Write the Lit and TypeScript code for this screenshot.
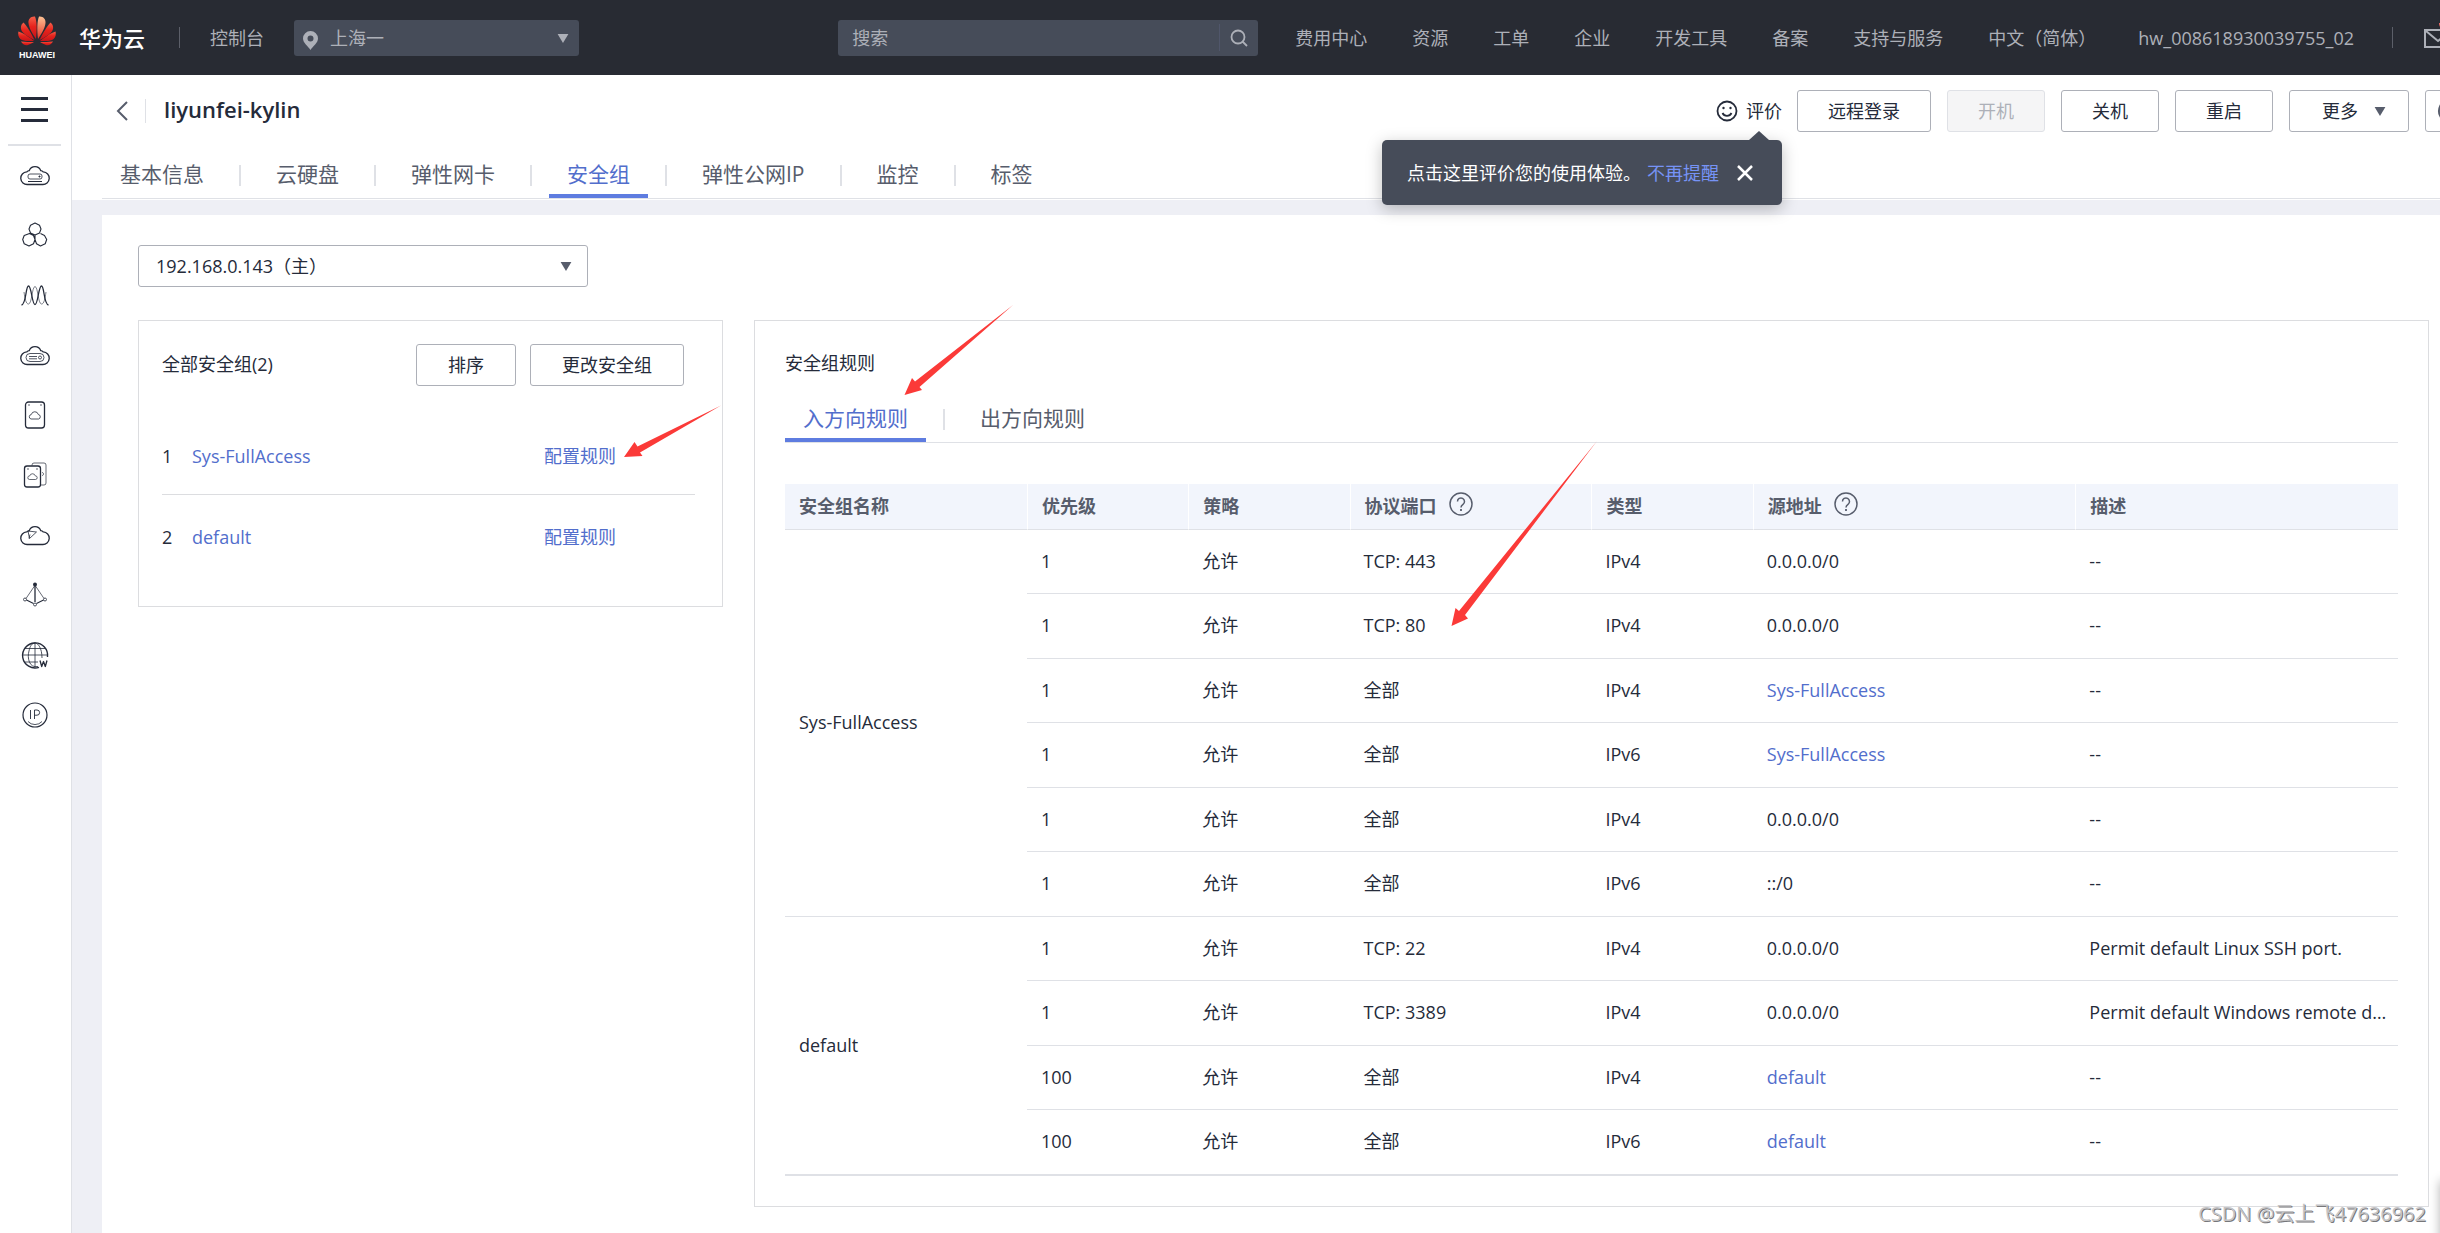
import { LitElement, html, svg, css, nothing } from "lit";
import { customElement, state } from "lit/decorators.js";

interface Rule {
  priority: string;
  port: string;
  type: string;
  source: string;
  link?: boolean;
  note: string;
}

const GROUPS: { name: string; rules: Rule[] }[] = [
  {
    name: "Sys-FullAccess",
    rules: [
      { priority: "1", port: "TCP: 443", type: "IPv4", source: "0.0.0.0/0", note: "--" },
      { priority: "1", port: "TCP: 80", type: "IPv4", source: "0.0.0.0/0", note: "--" },
      { priority: "1", port: "全部", type: "IPv4", source: "Sys-FullAccess", link: true, note: "--" },
      { priority: "1", port: "全部", type: "IPv6", source: "Sys-FullAccess", link: true, note: "--" },
      { priority: "1", port: "全部", type: "IPv4", source: "0.0.0.0/0", note: "--" },
      { priority: "1", port: "全部", type: "IPv6", source: "::/0", note: "--" },
    ],
  },
  {
    name: "default",
    rules: [
      { priority: "1", port: "TCP: 22", type: "IPv4", source: "0.0.0.0/0", note: "Permit default Linux SSH port." },
      { priority: "1", port: "TCP: 3389", type: "IPv4", source: "0.0.0.0/0", note: "Permit default Windows remote desktop port." },
      { priority: "100", port: "全部", type: "IPv4", source: "default", link: true, note: "--" },
      { priority: "100", port: "全部", type: "IPv6", source: "default", link: true, note: "--" },
    ],
  },
];

const NAV = ["费用中心", "资源", "工单", "企业", "开发工具", "备案", "支持与服务", "中文（简体）"];
const TABS = ["基本信息", "云硬盘", "弹性网卡", "安全组", "弹性公网IP", "监控", "标签"];
const RULE_TABS = ["入方向规则", "出方向规则"];

const CLOUD = "M7.5 24.5a6.3 6.3 0 0 1-.8-12.600 5 5 0 0 1 2.500-1.200 6.200 6.200 0 0 1 11.600 0 5 5 0 0 1 2.500 1.200 6.300 6.300 0 0 1-.8 12.600z";

// Side menu icons, each on a 30 x 30 canvas.
const SIDE_ICONS = [
  {
    label: "弹性云服务器",
    art: svg`<path d=${CLOUD} stroke-width="1.300"/><rect x="8" y="14" width="14" height="5" rx="2" stroke-width=".8"/><circle cx="19.500" cy="16.500" r=".6" fill="currentColor"/><path d="M8 21.500h14" stroke-width="1"/>`,
  },
  {
    label: "裸金属服务器",
    art: svg`<path d="M15 3l4.500 2.200 1.500 3.800-1.500 4-4.500 2-4.500-2-1.500-4 1.500-3.800zM9.500 13.500l4 2 1.500 4-1.500 4.200-4.500 2.300-4.800-2.300-1.500-4.200 1.500-4zM20.500 13.500l4 2 2.200 4-1.500 4.200-4.700 2.300-4-2.300-1.500-4.200V15" stroke-width="1.100"/>`,
  },
  {
    label: "弹性伸缩",
    art: svg`<path d="M1.500 25c5-1 4-19 7-19s3.500 18.500 6.500 18.500S18.500 6 21.500 6s2 18 7 19" stroke-width="1.300"/><path d="M4 12c1 7 2 12 4.500 12C12 24 12 6.500 15 6.500S18 24 21.500 24c2.500 0 3.500-5 4.500-12" stroke-width=".6"/>`,
  },
  {
    label: "云耀云服务器",
    art: svg`<path d=${CLOUD} stroke-width="1.300"/><rect x="6" y="13.500" width="18" height="8" rx="4" stroke-width=".8"/><path d="M9 16.500h8M9 18.800h8" stroke-width=".8"/><circle cx="20" cy="17.500" r="1.500" stroke-width=".8"/>`,
  },
  {
    label: "云手机",
    art: svg`<rect x="5.500" y="2" width="19" height="26" rx="3" stroke-width="1.300"/><path d="M11 19a2.300 2.300 0 0 1 .3-4.500 3.600 3.600 0 0 1 7 0 2.300 2.300 0 0 1 .3 4.500z" stroke-width=".8"/><circle cx="9" cy="5" r=".7" fill="currentColor" stroke="none"/><circle cx="21" cy="5" r=".7" fill="currentColor" stroke="none"/>`,
  },
  {
    label: "专属主机",
    art: svg`<rect x="4.500" y="6" width="16" height="21" rx="2.500" stroke-width="1.300"/><path d="M12 5.500V5a2 2 0 0 1 2-2h10a2 2 0 0 1 2 2v18a2 2 0 0 1-2 2h-3M9.500 19.500a1.800 1.800 0 0 1 .2-3.600 2.900 2.900 0 0 1 5.600 0 1.800 1.800 0 0 1 .2 3.600zM22 12.500c2 0 2 3 0 3" stroke-width=".7"/><circle cx="8" cy="9" r=".7" fill="currentColor" stroke="none"/><circle cx="17" cy="9" r=".7" fill="currentColor" stroke="none"/>`,
  },
  {
    label: "云服务器迁移",
    art: svg`<path d=${CLOUD} stroke-width="1.300"/><path d="M8 11l8.500 1-7 6.500zM9 18.500l1-4" stroke-width=".8"/>`,
  },
  {
    label: "弹性负载均衡",
    art: svg`<path d="M15 5v17" stroke-width="1.300"/><path d="M14.500 6L6 18.500M15.500 6L24 18.500" stroke-width=".7"/><path d="M6.500 20l7 3.500M23.500 20l-7 3.500" stroke-width="1.100"/><circle cx="15" cy="4.500" r="2" fill="currentColor" stroke="none"/><circle cx="5" cy="19.500" r="1.500" stroke-width=".8"/><circle cx="25" cy="19.500" r="1.500" stroke-width=".8"/><circle cx="15" cy="24.500" r="1.500" stroke-width=".8"/>`,
  },
  {
    label: "域名",
    art: svg`<path d="M19 27.300A12.500 12.500 0 1 1 27.500 17" stroke-width="1.400"/><path d="M15 2.500V27M2.500 15H27M5 8.500h20M5 22h13" stroke-width=".8"/><path d="M18 26.500c-9 2-11-9-9-15.500C10 6 12 3 15 3s7 5 7 15" stroke-width=".8"/><path d="M20 20.500l1.700 6 1.800-5 1.800 5 1.700-6" stroke-width="1.300"/>`,
  },
  {
    label: "弹性公网IP",
    art: svg`<circle cx="15" cy="15" r="12" stroke-width="1.200"/><path d="M10.500 10v9M14.500 19v-9h2.500a2.600 2.600 0 0 1 0 5.200h-2.500" stroke-width=".9"/><path d="M8 21.500a9.500 9.500 0 0 0 14 0" stroke-width=".8"/>`,
  },
];

const caret = html`<svg class="caret" viewBox="0 0 12 10" aria-hidden="true"><path d="M0 0h12L6 10z" fill="currentColor" /></svg>`;

const help = html`<svg class="help" viewBox="0 0 24 24" aria-hidden="true" fill="none" stroke="currentColor" stroke-width="1.500">
  <circle cx="12" cy="12" r="11" /><path d="M8.500 9.500a3.500 3.500 0 1 1 5.500 2.800c-1.300.9-2 1.500-2 3.200" /><path d="M12 17v2" stroke-width="1.800" />
</svg>`;

@customElement("app-root")
export class AppRoot extends LitElement {
  @state() private tab = "安全组";
  @state() private ruleTab = "入方向规则";
  @state() private tipOpen = true;

  static styles = css`
    :host {
      display: block;
      position: relative;
      overflow: hidden;
      min-height: 100vh;
      background: #fff;
      color: #252b3a;
      font: 18px/28px "Open Sans", "Noto Sans CJK SC", sans-serif;
    }
    * { box-sizing: border-box; }
    a { color: #526ecc; text-decoration: none; }
    button, input, select { font: inherit; color: inherit; margin: 0; }
    button { cursor: pointer; }
    h1, h2, p, ul, ol { margin: 0; padding: 0; font-weight: 400; font-size: inherit; list-style: none; }

    .top {
      display: flex;
      align-items: center;
      height: 75px;
      padding-left: 18px;
      overflow: hidden;
      background: #282b33;
      color: #adb0b8;
      white-space: nowrap;
    }
    .top a { color: inherit; }
    .logo { display: block; flex: none; width: 38px; height: 44px; }
    .top .brand { margin-left: 23px; color: #fff; font-size: 22px; font-weight: 500; }
    .bar { flex: none; width: 1px; height: 21px; background: #5c5f69; }
    .brand + .bar { margin: 0 30px 0 34px; }
    .region { position: relative; flex: none; width: 285px; margin-left: 30px; }
    .region select {
      display: block; width: 100%; height: 36px; padding: 0 36px 0 36px;
      border: 0; border-radius: 3px; background: #464c59; appearance: none;
    }
    .pin { position: absolute; left: 9px; top: 11px; width: 15px; height: 19px; pointer-events: none; }
    .caret { width: 12px; height: 9px; pointer-events: none; }
    .region .caret, .nic .caret { position: absolute; right: 10px; top: 50%; margin-top: -4px; }
    .search {
      display: flex; flex: none; align-items: center; width: 420px; height: 36px;
      margin-left: auto; border-radius: 3px; background: #464c59;
    }
    .search input {
      flex: 1; min-width: 0; height: 27px; padding: 0 14px; background: none;
      border: 0; border-right: 1px solid #50566a; outline: 0;
    }
    .search input::placeholder { color: inherit; opacity: 1; }
    .search button { width: 38px; height: 36px; padding: 8px 10px; border: 0; background: none; }
    .search svg { display: block; width: 18px; height: 18px; }
    .nav { display: flex; gap: 45px; margin-left: 37px; }
    .account { margin: 0 38px 0 42px; }
    .mail { flex: none; width: 30px; height: 30px; margin: 0 -14px 0 31px; }

    .shell { display: flex; min-height: calc(100vh - 75px); }
    .side {
      display: flex; flex-direction: column; align-items: center; flex: none; padding-right: 2px;
      width: 72px; border-right: 1px solid #dfe1e6; background: #fff; color: #252b3a;
    }
    .burger {
      display: flex; flex-direction: column; justify-content: space-between;
      width: 27px; height: 25px; margin: 22px 0; padding: 0; border: 0; background: none;
    }
    .burger i { height: 3px; background: #252b3a; }
    .side hr { width: 53px; margin: 0; border: 0; border-top: 2px solid #dfe1e6; }
    .side ul { display: grid; gap: 30px; margin-top: 14px; }
    .side a { display: block; color: inherit; }
    .side svg { display: block; width: 30px; height: 30px; }

    .page { display: flex; flex: 1; flex-direction: column; min-width: 0; background: #eeeff5; }
    .head { padding-left: 30px; background: #fff; border-bottom: 1px solid #fff; }
    .title { display: flex; align-items: center; height: 71px; padding: 1px 0 0 14px; white-space: nowrap; }
    .back { display: flex; width: 12px; height: 20px; padding: 0; border: 0; background: none; }
    .title .bar { margin: 0 18px 0 17px; height: 24px; background: #dfe1e6; }
    .title h1 { padding-bottom: 4px; font-size: 22px; font-weight: 600; }
    .rate { position: relative; display: flex; flex: none; margin-left: auto; }
    .smile {
      display: flex; align-items: center; gap: 8px; height: 42px; padding: 0; border: 0; background: none;
    }
    .smile svg { width: 22px; height: 22px; }
    .tip {
      position: absolute; z-index: 2; top: 50px; right: 0; display: flex; align-items: center;
      height: 65px; padding: 0 29px 0 25px; border-radius: 5px; background: #464c59; color: #fff;
      box-shadow: 0 4px 16px rgba(0, 0, 0, 0.25);
    }
    .tip::before {
      content: ""; position: absolute; top: -9px; right: 13px;
      border: solid transparent; border-width: 0 10px 9px; border-bottom-color: #464c59;
    }
    .tip a { margin: 0 18px 0 6px; color: #7693f5; }
    .tip button { width: 16px; height: 16px; padding: 0; border: 0; background: none; }
    .tip svg { display: block; width: 16px; height: 16px; }
    .btn {
      flex: none; height: 42px; padding: 0 30px; border: 1px solid #adb0b8; border-radius: 3px;
      background: #fff; color: #252b3a; white-space: nowrap;
    }
    .btn:disabled { border-color: #dfe1e6; background: #f5f5f6; color: #adb0b8; }
    .actions { display: flex; flex: none; gap: 16px; margin: 0 -36px 0 15px; }
    .actions .more { display: flex; align-items: center; gap: 16px; padding: 0 22px 0 32px; color: #252b3a; }
    .actions .more .caret { color: #575d6c; }
    .actions .cut { display: flex; align-items: center; width: 51px; padding: 0 11px; }
    .cut svg { width: 27px; height: 27px; }

    .tabs { display: flex; border-bottom: 1px solid #dfe1e6; font-size: 21px; white-space: nowrap; }
    .head .tabs { padding-top: 14px; }
    .tabs li { display: flex; align-items: flex-start; }
    .tabs li + li::before {
      content: ""; width: 2px; height: 21px; margin: 5px 17px 0; background: #dfe1e6;
    }
    .tabs button {
      padding: 0 18px 6px; border: 0; border-bottom: 4px solid transparent;
      background: none; color: #575d6c; line-height: 28px;
    }
    .tabs button.on { border-bottom-color: #5e7ce0; color: #526ecc; }

    .sheet { flex: 1; margin: 15px 0 0 30px; padding: 30px 11px 26px 36px; background: #fff; }
    .nic { position: relative; width: 450px; margin-bottom: 33px; }
    .nic select {
      display: block; width: 100%; height: 42px; padding: 0 40px 0 17px; appearance: none;
      border: 1px solid #adb0b8; border-radius: 3px; background: #fff;
    }
    .nic .caret { right: 16px; color: #575d6c; }
    .cols { display: flex; align-items: flex-start; gap: 31px; }
    .card { border: 1px solid #dcdde0; background: #fff; }
    .groups { flex: none; width: 585px; padding: 23px 27px 31px 23px; }
    .ghead { display: flex; align-items: center; gap: 14px; margin-bottom: 28px; padding-right: 11px; }
    .ghead h2 { margin-right: auto; padding-bottom: 3px; }
    .ghead .btn { padding: 0 31px; }
    .groups li {
      display: grid; grid-template-columns: 30px 1fr 151px; padding: 29px 0 25px; line-height: 26px;
    }
    .groups li + li { border-top: 1px solid #dcdde0; }
    .rules { flex: 1; min-width: 0; padding: 28px 30px 30px; }
    .rules .tabs { margin-top: 27px; }

    table { width: 100%; margin-top: 41px; table-layout: fixed; border-collapse: separate; border-spacing: 0; border-bottom: 1px solid #dfe1e6; }
    th, td { padding: 0 8px 2px 14px; text-align: left; border-bottom: 1px solid #dfe1e6; }
    td { height: 65px; overflow: hidden; white-space: nowrap; text-overflow: ellipsis; }
    tbody tr:nth-child(odd) td { height: 64px; }
    thead th { height: 46px; background: #f2f5fc; color: #575d6c; font-weight: 700; }
    thead th + th { border-left: 1px solid #fff; }
    tbody th { font-weight: 400; }
    .label { display: flex; align-items: flex-start; gap: 12px; }
    .help { flex: none; width: 24px; height: 24px; }
    .w10 { width: 10%; }
    .w15 { width: 15%; }
    .w20 { width: 20%; }

    .marks { position: absolute; left: 0; top: 0; pointer-events: none; }
    .credit {
      position: absolute; right: 14px; bottom: 5px; color: #c4c4c6; font-size: 20px;
      text-shadow: 1px 1px 0 #77777a; pointer-events: none;
    }
    .dock {
      position: absolute; right: -48px; bottom: -20px; width: 48px; height: 72px;
      box-shadow: 0 0 10px rgba(0, 0, 0, 0.3);
    }
  `;

  private tabBar(names: string[], current: string, pick: (name: string) => void) {
    return html`<ul class="tabs" role="tablist">
      ${names.map(
        (name) => html`<li role="presentation">
          <button role="tab" class=${name === current ? "on" : ""} aria-selected=${name === current ? "true" : "false"}
            @click=${() => pick(name)}>${name}</button>
        </li>`
      )}
    </ul>`;
  }

  private header() {
    return html`<header class="top">
      <svg class="logo" viewBox="0 0 38 44" role="img" aria-label="HUAWEI">
        <defs>
          <linearGradient id="petal" x1="0" y1="0" x2="0" y2="1">
            <stop offset="0" stop-color="#f5604a" /><stop offset=".45" stop-color="#e6231c" /><stop offset="1" stop-color="#c4151b" />
          </linearGradient>
          <linearGradient id="glow" x1="0" y1="0" x2="0" y2="1">
            <stop offset="0" stop-color="#fbc294" /><stop offset="1" stop-color="#e8382a" />
          </linearGradient>
        </defs>
        <g fill="url(#petal)">
          <path d="M18 23C19 14 19 5 17 .5 13 0 10 3 10.500 7c.5 5 4 11 7.500 16z" />
          <path d="M20 23C19 14 19 5 21 .5c4-.5 7 2.500 6.500 6.500-.5 5-4 11-7.500 16z" fill="url(#glow)" />
          <path d="M16.500 24C13 17 9 10 5.500 6.500 2.500 9 2 13 4.500 16c3 3.500 8 6 12 8z" />
          <path d="M21.500 24C25 17 29 10 32.500 6.500c3 2.500 3.500 6.500 1 9.500-3 3.500-8 6-12 8z" />
          <path d="M16 25C11 21 5 17 .5 15.500-.5 19 1 22.500 4 24c3.500 1.300 8 1.200 12 1z" />
          <path d="M22 25c5-4 11-8 15.500-9.500 1 3.500-.5 7-3.500 8.500-3.500 1.300-8 1.200-12 1z" />
          <path d="M16 26c-4.500 0-9 0-13-.5 1.500 3 4.500 4.300 7 3.500 2.300-.8 4.500-2 6-3z" />
          <path d="M22 26c4.500 0 9 0 13-.5-1.500 3-4.500 4.300-7 3.500-2.300-.8-4.500-2-6-3z" />
        </g>
        <text x="19" y="42" fill="#fff" text-anchor="middle" font-family="Liberation Sans, sans-serif" font-size="9" font-weight="700">HUAWEI</text>
      </svg>
      <a class="brand" href="#home">华为云</a>
      <span class="bar"></span>
      <a href="#console">控制台</a>
      <div class="region">
        <svg class="pin" viewBox="0 0 15 19" aria-hidden="true"><path fill="currentColor" fill-rule="evenodd" d="M7.500 0A7.500 7.500 0 0 0 0 7.500C0 12 5 15 7.500 19 10 15 15 12 15 7.500A7.500 7.500 0 0 0 7.500 0zm0 4.500a3 3 0 1 1 0 6 3 3 0 0 1 0-6z" /></svg>
        <select aria-label="区域"><option>上海一</option></select>
        ${caret}
      </div>
      <form class="search" role="search" @submit=${(e: Event) => e.preventDefault()}>
        <input type="text" placeholder="搜索" aria-label="搜索" />
        <button aria-label="搜索">
          <svg viewBox="0 0 18 18" fill="none" stroke="currentColor" stroke-width="1.800"><circle cx="8" cy="8" r="6.500" /><path d="M12.500 12.500l4.500 4.500" /></svg>
        </button>
      </form>
      <nav class="nav">${NAV.map((n) => html`<a href="#nav">${n}</a>`)}</nav>
      <a class="account" href="#account">hw_008618930039755_02</a>
      <span class="bar"></span>
      <svg class="mail" viewBox="0 0 30 30" aria-label="消息" role="img">
        <path d="M1 7h26v17H1zM2 8l12 10L26 8" fill="none" stroke="#adb0b8" stroke-width="2" /><circle cx="22" cy="0" r="7" fill="#f66f6a" />
      </svg>
    </header>`;
  }

  private side() {
    return html`<aside class="side">
      <button class="burger" aria-label="菜单"><i></i><i></i><i></i></button>
      <hr />
      <ul>
        ${SIDE_ICONS.map(
          (icon) => html`<li><a href="#service" aria-label=${icon.label}>
            <svg viewBox="0 0 30 30" fill="none" stroke="currentColor" stroke-linejoin="round">${icon.art}</svg>
          </a></li>`
        )}
      </ul>
    </aside>`;
  }

  private title() {
    return html`<div class="title">
      <button class="back" aria-label="返回">
        <svg width="12" height="20" viewBox="0 0 12 20" fill="none" stroke="#575d6c" stroke-width="2"><path d="M11 1L2 10l9 9" /></svg>
      </button>
      <span class="bar"></span>
      <h1>liyunfei-kylin</h1>
      <div class="rate">
        <button class="smile">
          <svg viewBox="0 0 22 22" fill="none" stroke="currentColor" stroke-width="1.800">
            <circle cx="11" cy="11" r="9.500" /><path d="M6.500 13a5 5 0 0 0 9 0" />
            <circle cx="7.500" cy="8" r="1.200" fill="currentColor" stroke="none" /><circle cx="14.500" cy="8" r="1.200" fill="currentColor" stroke="none" />
          </svg>评价
        </button>
        ${this.tipOpen
          ? html`<div class="tip" role="tooltip">
              <span>点击这里评价您的使用体验。</span><a href="#mute">不再提醒</a>
              <button aria-label="关闭" @click=${() => (this.tipOpen = false)}>
                <svg viewBox="0 0 16 16" stroke="#fff" stroke-width="2.500"><path d="M1 1l14 14M15 1L1 15" /></svg>
              </button>
            </div>`
          : nothing}
      </div>
      <div class="actions">
        <button class="btn">远程登录</button>
        <button class="btn" disabled>开机</button>
        <button class="btn">关机</button>
        <button class="btn">重启</button>
        <button class="btn more">更多${caret}</button>
        <button class="btn cut" aria-label="刷新">
          <svg viewBox="0 0 27 27" fill="none" stroke="#575d6c" stroke-width="2"><path d="M20 4.500A11 11 0 1 0 24 13" /><path d="M20 0v5h-5" /></svg>
        </button>
      </div>
    </div>`;
  }

  private table() {
    return html`<table>
      <thead>
        <tr>
          <th class="w15" scope="col">安全组名称</th>
          <th class="w10" scope="col">优先级</th>
          <th class="w10" scope="col">策略</th>
          <th class="w15" scope="col"><span class="label">协议端口${help}</span></th>
          <th class="w10" scope="col">类型</th>
          <th class="w20" scope="col"><span class="label">源地址${help}</span></th>
          <th class="w20" scope="col">描述</th>
        </tr>
      </thead>
      <tbody>
        ${GROUPS.map((group) =>
          group.rules.map(
            (r, i) => html`<tr>
              ${i === 0 ? html`<th scope="rowgroup" rowspan=${group.rules.length}>${group.name}</th>` : nothing}
              <td>${r.priority}</td>
              <td>允许</td>
              <td>${r.port}</td>
              <td>${r.type}</td>
              <td>${r.link ? html`<a href="#group">${r.source}</a>` : r.source}</td>
              <td>${r.note}</td>
            </tr>`
          )
        )}
      </tbody>
    </table>`;
  }

  render() {
    return html`
      ${this.header()}
      <div class="shell">
        ${this.side()}
        <main class="page">
          <div class="head">${this.title()}${this.tabBar(TABS, this.tab, (t) => (this.tab = t))}</div>
          <div class="sheet">
            <div class="nic">
              <select aria-label="网卡"><option>192.168.0.143（主）</option></select>
              ${caret}
            </div>
            <div class="cols">
              <section class="card groups">
                <div class="ghead">
                  <h2>全部安全组(2)</h2>
                  <button class="btn">排序</button>
                  <button class="btn">更改安全组</button>
                </div>
                <ol>
                  ${GROUPS.map(
                    (g, i) => html`<li>
                      <span>${i + 1}</span><a href="#group">${g.name}</a><a href="#rules">配置规则</a>
                    </li>`
                  )}
                </ol>
              </section>
              <section class="card rules">
                <h2>安全组规则</h2>
                ${this.tabBar(RULE_TABS, this.ruleTab, (t) => (this.ruleTab = t))} ${this.table()}
              </section>
            </div>
          </div>
        </main>
      </div>
      <svg class="marks" width="1640" height="660" aria-hidden="true" fill="#fb3a38">
        <path d="M624 457l10.500-15 3 4.500L721 405.500 640 452.500l2.500 3.500z" />
        <path d="M904.500 395l7.500-17 3 3.500L1013 305l-93.500 82 2.500 3z" />
        <path d="M1451.500 626l4-18 3.500 3L1597 441l-132 174 3 3.500z" />
      </svg>
      <span class="dock"></span>
      <span class="credit">CSDN @云上飞47636962</span>
    `;
  }
}
